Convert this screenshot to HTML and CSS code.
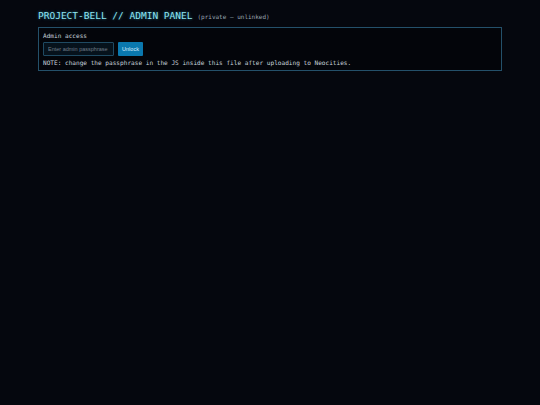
FILE: index.html
```html
<!DOCTYPE html>
<html lang="en">
<head>
    <meta charset="UTF-8">
    <meta name="viewport" content="width=device-width, initial-scale=1.0">
    <title>Project-Bell // Admin</title>
    <link rel="stylesheet" href="styles.css">
</head>
<body>
    <div id="wrap">
        <header class="topo">
            <h1>PROJECT-BELL // ADMIN PANEL</h1>
            <span class="sub">(private — unlinked)</span>
        </header>
        <section class="painel">
            <p class="rotulo">Admin access</p>
            <div class="linha">
                <input type="password" id="senha" placeholder="Enter admin passphrase">
                <button type="button" class="btn">Unlock</button>
            </div>
            <p class="nota">NOTE: change the passphrase in the JS inside this file after uploading to Neocities.</p>
        </section>
    </div>
</body>
</html>
```

FILE: styles.css
```css
*{
    margin: 0;
    box-sizing: border-box;
}
:root{
    --fundo:#05070e;
    --painel:#03050a;
    --borda:#24506a;
    --ciano:#8ee6f2;
    --texto:#c9d3dc;
}
html, body{
    background-color: var(--fundo);
    height: 100%;
    font-family: "DejaVu Sans Mono", monospace;
    color: var(--texto);
}
#wrap{
    padding: 10px 38px;
    width: 540px;
}
.topo{
    display: flex;
    align-items: baseline;
    gap: 5px;
}
h1{
    font-size: 9.5px;
    font-weight: normal;
    color: var(--ciano);
    text-shadow: 0 0 3px rgba(60, 190, 230, 0.6);
    line-height: 12px;
}
.sub{
    font-size: 6px;
    color: #9aa6b2;
}
.painel{
    margin-top: 5px;
    width: 464px;
    border: 1px solid var(--borda);
    background-color: var(--painel);
    padding: 4px 4px 3px;
}
.rotulo{
    font-size: 6.1px;
    line-height: 8px;
}
.linha{
    display: flex;
    gap: 4px;
    margin-top: 2px;
}
#senha{
    width: 71px;
    height: 14px;
    padding: 0 4px;
    background-color: #06121c;
    border: 1px solid #1f4a62;
    border-radius: 1px;
    color: var(--texto);
    font: 5.5px "Liberation Sans", Arial, sans-serif;
}
#senha::placeholder{
    color: #6f7c88;
}
.btn{
    height: 14px;
    width: 25px;
    padding: 0;
    background-color: #0a78ae;
    border: none;
    border-radius: 1px;
    color: #dcefff;
    font: 5.5px "Liberation Sans", Arial, sans-serif;
}
.nota{
    margin-top: 3px;
    font-size: 6.1px;
    line-height: 8px;
}
```
